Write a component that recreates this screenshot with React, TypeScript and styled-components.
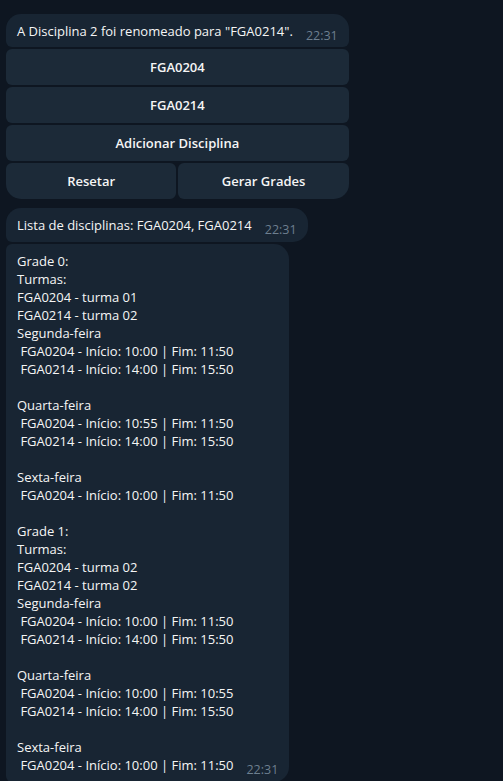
import React from "react";
import styled, { createGlobalStyle } from "styled-components";

const Global = createGlobalStyle`
  html, body {
    margin: 0;
    padding: 0;
    background: #0e1621;
  }
  body {
    font-family: "Open Sans", "Noto Sans", sans-serif;
    font-size: 13px;
    color: #f5f5f5;
  }
`;

const Chat = styled.div`
  display: flex;
  flex-direction: column;
  align-items: flex-start;
  gap: 9px;
  padding: 14px 0 0 6px;
  height: 781px;
  box-sizing: border-box;
  overflow: hidden;
`;

const MessageBlock = styled.div`
  display: inline-flex;
  flex-direction: column;
  gap: 2px;
`;

const Group = styled.div`
  display: flex;
  flex-direction: column;
  align-items: flex-start;
  gap: 2px;
`;

type Corners = { $tl?: number; $tr?: number; $br?: number; $bl?: number };

const Bubble = styled.div<Corners & { $pb?: number }>`
  display: flex;
  flex-direction: row;
  align-items: flex-end;
  gap: 13px;
  background: #182533;
  padding: 8px 11px ${(p) => p.$pb ?? 8}px 11px;
  border-radius: ${(p) => `${p.$tl ?? 15}px ${p.$tr ?? 15}px ${p.$br ?? 15}px ${p.$bl ?? 15}px`};
  flex-shrink: 0;
`;

const Text = styled.div`
  white-space: pre;
  line-height: 18px;
  font-size: 13px;
  color: #f5f5f5;
`;

const Time = styled.span`
  font-size: 12.5px;
  line-height: 18px;
  color: #6d7f8f;
  margin-bottom: -5px;
  white-space: nowrap;
`;

const Keyboard = styled.div`
  display: flex;
  flex-direction: column;
  gap: 2px;
`;

const KeyRow = styled.div`
  display: flex;
  gap: 2px;
`;

const KeyButton = styled.button<Corners>`
  flex: 1 1 0;
  height: 36px;
  border: none;
  background: #1c2a38;
  color: #f5f5f5;
  font-family: "Open Sans", "Noto Sans", sans-serif;
  font-size: 13px;
  font-weight: 600;
  padding: 0;
  border-radius: ${(p) => `${p.$tl ?? 6}px ${p.$tr ?? 6}px ${p.$br ?? 6}px ${p.$bl ?? 6}px`};
  cursor: pointer;
`;

const grades = `Grade 0:
Turmas:
FGA0204 - turma 01
FGA0214 - turma 02
Segunda-feira
 FGA0204 - Início: 10:00 | Fim: 11:50
 FGA0214 - Início: 14:00 | Fim: 15:50

Quarta-feira
 FGA0204 - Início: 10:55 | Fim: 11:50
 FGA0214 - Início: 14:00 | Fim: 15:50

Sexta-feira
 FGA0204 - Início: 10:00 | Fim: 11:50

Grade 1:
Turmas:
FGA0204 - turma 02
FGA0214 - turma 02
Segunda-feira
 FGA0204 - Início: 10:00 | Fim: 11:50
 FGA0214 - Início: 14:00 | Fim: 15:50

Quarta-feira
 FGA0204 - Início: 10:00 | Fim: 10:55
 FGA0214 - Início: 14:00 | Fim: 15:50

Sexta-feira
 FGA0204 - Início: 10:00 | Fim: 11:50`;

export default function App() {
  return (
    <>
      <Global />
      <Chat>
        <MessageBlock>
          <Bubble $bl={6} $br={6} $pb={7}>
            <Text>A Disciplina 2 foi renomeado para "FGA0214".</Text>
            <Time>22:31</Time>
          </Bubble>
          <Keyboard>
            <KeyRow>
              <KeyButton>FGA0204</KeyButton>
            </KeyRow>
            <KeyRow>
              <KeyButton>FGA0214</KeyButton>
            </KeyRow>
            <KeyRow>
              <KeyButton>Adicionar Disciplina</KeyButton>
            </KeyRow>
            <KeyRow>
              <KeyButton $bl={15}>Resetar</KeyButton>
              <KeyButton $br={15}>Gerar Grades</KeyButton>
            </KeyRow>
          </Keyboard>
        </MessageBlock>
        <Group>
          <Bubble $bl={6}>
            <Text>Lista de disciplinas: FGA0204, FGA0214</Text>
            <Time>22:31</Time>
          </Bubble>
          <Bubble $tl={6} $bl={6}>
            <Text>{grades}</Text>
            <Time>22:31</Time>
          </Bubble>
        </Group>
      </Chat>
    </>
  );
}
